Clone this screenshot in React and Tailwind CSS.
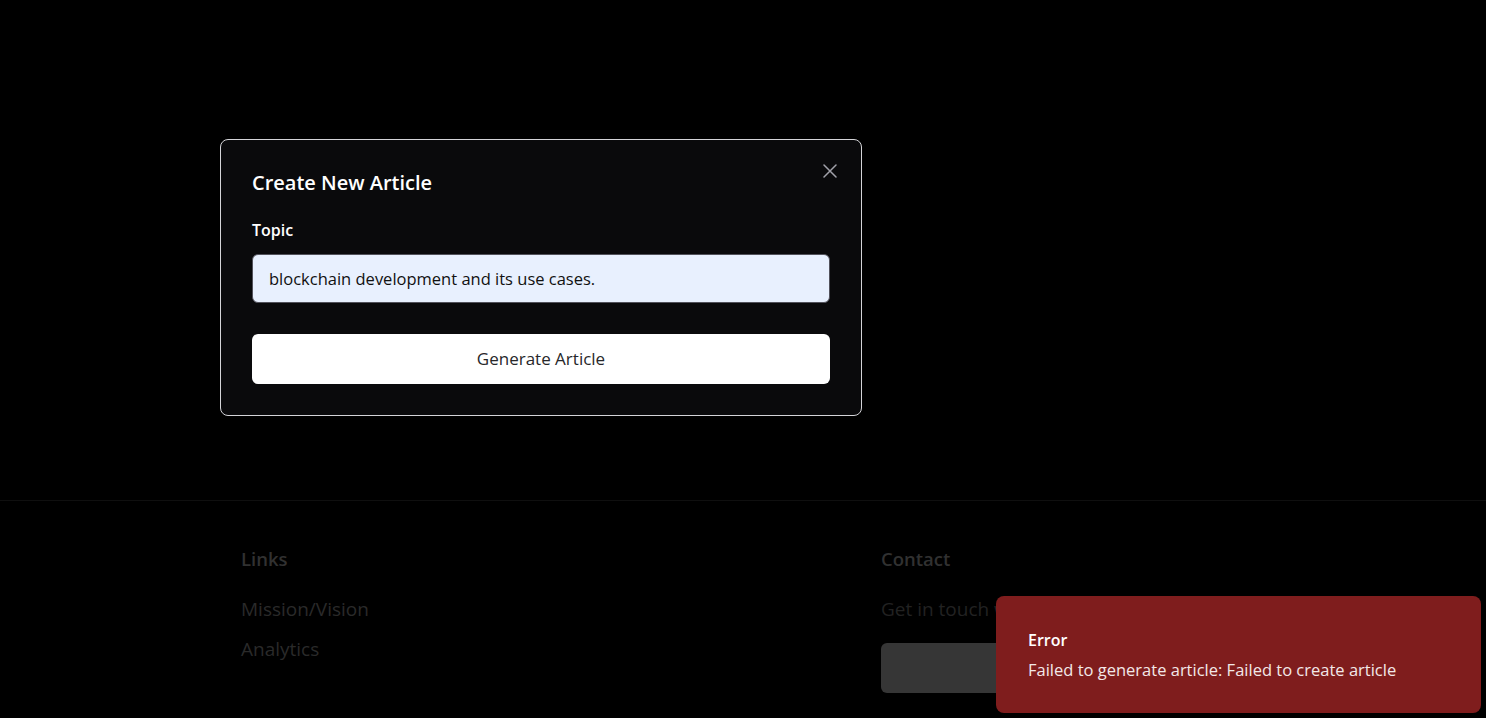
const font = { fontFamily: '"Open Sans", "Noto Sans", sans-serif' }

function CloseIcon() {
  return (
    <svg width="14" height="14" viewBox="0 0 14 14" fill="none" stroke="currentColor" strokeWidth="1.5" strokeLinecap="round">
      <path d="M1 1l12 12M13 1L1 13" />
    </svg>
  )
}

function ArticleDialog() {
  return (
    <div className="w-[642px] rounded-lg border border-[#d4d4d8] bg-[#0a0a0c] px-[31px] pt-[29px] pb-[31px] relative">
      <button className="absolute right-[24px] top-[24px] text-[#a1a1aa]">
        <CloseIcon />
      </button>
      <h2 className="text-[20px] leading-7 font-semibold text-white">Create New Article</h2>
      <label className="block mt-[21px] text-base leading-6 font-semibold text-white">Topic</label>
      <input
        readOnly
        value="blockchain development and its use cases."
        className="mt-3 block w-full h-[49px] rounded-md border border-[#52525b] bg-[#e8f0fe] px-4 text-[16.5px] text-[#111] outline-none"
        style={font}
      />
      <button
        className="mt-[31px] w-full h-[50px] rounded-md bg-white text-[17px] font-medium text-[#27272a]"
        style={font}
      >
        Generate Article
      </button>
    </div>
  )
}

function Footer() {
  return (
    <footer className="border-t border-[#0f0f0f] pt-11 pl-[241px]">
      <div className="grid grid-cols-[640px_1fr]">
        <div>
          <h3 className="text-[18.5px] leading-7 font-semibold text-[#313131]">Links</h3>
          <ul className="mt-[22px] flex flex-col gap-3 text-[19px] leading-7 text-[#2a2a2a]">
            <li>Mission/Vision</li>
            <li>Analytics</li>
          </ul>
        </div>
        <div>
          <h3 className="text-[18.5px] leading-7 font-semibold text-[#313131]">Contact</h3>
          <p className="mt-[22px] text-[19px] leading-7 text-[#222]">Get in touch with us</p>
          <div className="mt-5 w-[260px] h-[50px] rounded-md bg-[#363636]" />
        </div>
      </div>
    </footer>
  )
}

function Toast() {
  return (
    <div className="fixed right-[5px] bottom-[5px] w-[485px] rounded-lg bg-[#7f1d1d] px-8 pt-8 pb-[31px] text-white" style={font}>
      <div className="text-base leading-6 font-semibold">Error</div>
      <div className="mt-1.5 text-[16.5px] leading-6 opacity-90">Failed to generate article: Failed to create article</div>
    </div>
  )
}

export default function App() {
  return (
    <div className="h-screen overflow-hidden bg-black" style={font}>
      <main className="h-[500px] pl-[220px] pt-[139px]">
        <ArticleDialog />
      </main>
      <Footer />
      <Toast />
    </div>
  )
}
